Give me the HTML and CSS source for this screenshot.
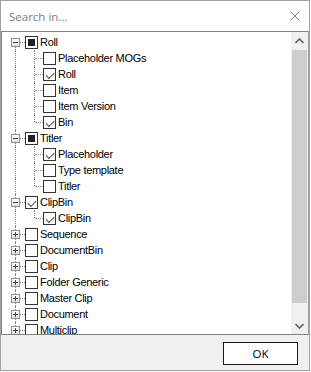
FILE: index.html
```html
<!DOCTYPE html>
<html lang="en">
<head>
    <meta charset="UTF-8">
    <title>Search in...</title>
    <link rel="stylesheet" href="styles.css">
</head>
<body>
    <div class="dialog">
        <div class="search">
            <span class="placeholder">Search in...</span>
            <svg class="close" width="10" height="10" viewBox="0 0 10 10">
                <path d="M0.5 0.5 L9.5 9.5 M9.5 0.5 L0.5 9.5" stroke="#7a7a7a" stroke-width="1" fill="none"/>
            </svg>
        </div>

        <div class="tree-box">
            <ul class="tree">
                <!-- Roll -->
                <li class="row first"><span class="guide root"><span class="expander minus"></span></span><span class="check partial"></span><span class="label">Roll</span></li>
                <li class="row"><span class="guide pass"></span><span class="guide branch"></span><span class="check"></span><span class="label">Placeholder MOGs</span></li>
                <li class="row"><span class="guide pass"></span><span class="guide branch"></span><span class="check checked"></span><span class="label">Roll</span></li>
                <li class="row"><span class="guide pass"></span><span class="guide branch"></span><span class="check"></span><span class="label">Item</span></li>
                <li class="row"><span class="guide pass"></span><span class="guide branch"></span><span class="check"></span><span class="label">Item Version</span></li>
                <li class="row"><span class="guide pass"></span><span class="guide branch last"></span><span class="check checked"></span><span class="label">Bin</span></li>

                <!-- Titler -->
                <li class="row"><span class="guide root"><span class="expander minus"></span></span><span class="check partial"></span><span class="label">Titler</span></li>
                <li class="row"><span class="guide pass"></span><span class="guide branch"></span><span class="check checked"></span><span class="label">Placeholder</span></li>
                <li class="row"><span class="guide pass"></span><span class="guide branch"></span><span class="check"></span><span class="label">Type template</span></li>
                <li class="row"><span class="guide pass"></span><span class="guide branch last"></span><span class="check"></span><span class="label">Titler</span></li>

                <!-- ClipBin -->
                <li class="row"><span class="guide root"><span class="expander minus"></span></span><span class="check checked"></span><span class="label">ClipBin</span></li>
                <li class="row"><span class="guide pass"></span><span class="guide branch last"></span><span class="check checked"></span><span class="label">ClipBin</span></li>

                <!-- collapsed -->
                <li class="row"><span class="guide root"><span class="expander plus"></span></span><span class="check"></span><span class="label">Sequence</span></li>
                <li class="row"><span class="guide root"><span class="expander plus"></span></span><span class="check"></span><span class="label">DocumentBin</span></li>
                <li class="row"><span class="guide root"><span class="expander plus"></span></span><span class="check"></span><span class="label">Clip</span></li>
                <li class="row"><span class="guide root"><span class="expander plus"></span></span><span class="check"></span><span class="label">Folder Generic</span></li>
                <li class="row"><span class="guide root"><span class="expander plus"></span></span><span class="check"></span><span class="label">Master Clip</span></li>
                <li class="row"><span class="guide root"><span class="expander plus"></span></span><span class="check"></span><span class="label">Document</span></li>
                <li class="row"><span class="guide root"><span class="expander plus"></span></span><span class="check"></span><span class="label">Multiclip</span></li>
            </ul>

            <div class="scrollbar">
                <div class="arrow up">
                    <svg width="9" height="6" viewBox="0 0 9 6"><path d="M0.5 5 L4.5 1 L8.5 5" stroke="#606060" stroke-width="1.6" fill="none"/></svg>
                </div>
                <div class="track"><div class="thumb"></div></div>
                <div class="arrow down">
                    <svg width="9" height="6" viewBox="0 0 9 6"><path d="M0.5 1 L4.5 5 L8.5 1" stroke="#606060" stroke-width="1.6" fill="none"/></svg>
                </div>
            </div>
        </div>

        <div class="footer">
            <button class="ok">OK</button>
        </div>
    </div>
</body>
</html>
```

FILE: styles.css
```css
* {
    margin: 0;
    padding: 0;
    box-sizing: border-box;
}

body {
    background: #ffffff;
    font-family: 'Liberation Sans', Arial, sans-serif;
}

.dialog {
    width: 310px;
    height: 371px;
    border: 1px solid #a0a0a0;
    background: #f0f0f0;
    display: flex;
    flex-direction: column;
}

.search {
    height: 30px;
    background: #ffffff;
    display: flex;
    align-items: center;
    justify-content: space-between;
    padding: 0 9px 0 8px;
}

.placeholder {
    font-family: 'Open Sans', sans-serif;
    font-size: 11.5px;
    color: #7a7a7a;
}

.tree-box {
    height: 304px;
    border: 1px solid #828282;
    border-right-color: #a0a0a0;
    background: #ffffff;
    display: flex;
}

.tree {
    flex: 1;
    list-style: none;
    overflow: hidden;
    padding-top: 2px;
}

.row {
    height: 16px;
    display: flex;
    align-items: center;
    font-size: 11px;
    letter-spacing: -0.3px;
    line-height: 16px;
    color: #000000;
    white-space: nowrap;
}

/* tree guide lines */
.guide {
    position: relative;
    height: 16px;
    flex-shrink: 0;
}

.guide.root,
.guide.pass {
    width: 23px;
}

.guide.branch {
    width: 18px;
}

.guide.root::before,
.guide.pass::before {
    content: '';
    position: absolute;
    left: 13px;
    top: 0;
    bottom: 0;
    border-left: 1px dotted #8a8a8a;
}

.first .guide.root::before {
    top: 8px;
}

.guide.root::after {
    content: '';
    position: absolute;
    left: 18px;
    width: 5px;
    top: 8px;
    border-top: 1px dotted #8a8a8a;
}

.guide.branch::before {
    content: '';
    position: absolute;
    left: 9px;
    top: 0;
    bottom: 0;
    border-left: 1px dotted #8a8a8a;
}

.guide.branch.last::before {
    bottom: 8px;
}

.guide.branch::after {
    content: '';
    position: absolute;
    left: 10px;
    width: 8px;
    top: 8px;
    border-top: 1px dotted #8a8a8a;
}

.expander {
    position: absolute;
    left: 9px;
    top: 4px;
    width: 9px;
    height: 9px;
    border: 1px solid #919191;
    background: linear-gradient(#ffffff, #e0e0e0);
    z-index: 1;
}

.expander::before {
    content: '';
    position: absolute;
    left: 1px;
    top: 3px;
    width: 5px;
    height: 1px;
    background: #2f4b7c;
}

.expander.plus::after {
    content: '';
    position: absolute;
    left: 3px;
    top: 1px;
    width: 1px;
    height: 5px;
    background: #2f4b7c;
}

/* checkboxes */
.check {
    width: 13px;
    height: 13px;
    border: 1px solid #333333;
    background: #ffffff;
    flex-shrink: 0;
    position: relative;
}

.check.partial::before {
    content: '';
    position: absolute;
    left: 2px;
    top: 2px;
    width: 7px;
    height: 7px;
    background: #222222;
}

.check.checked::before {
    content: '';
    position: absolute;
    left: 2px;
    top: 1px;
    width: 7px;
    height: 4px;
    border-left: 1.5px solid #444444;
    border-bottom: 1.5px solid #444444;
    transform: translate(0, 2px) rotate(-45deg);
    transform-origin: center;
}

.label {
    margin-left: 2px;
}

/* scrollbar */
.scrollbar {
    width: 17px;
    background: #f0f0f0;
    display: flex;
    flex-direction: column;
}

.arrow {
    height: 17px;
    display: flex;
    align-items: center;
    justify-content: center;
}

.track {
    flex: 1;
    padding: 1px 1px;
}

.thumb {
    height: 253px;
    background: #cdcdcd;
}

/* footer */
.footer {
    flex: 1;
    display: flex;
    justify-content: flex-end;
    padding: 7px 11px 0 0;
}

.ok {
    width: 75px;
    height: 23px;
    border: 1px solid #1a1a1a;
    background: #ffffff;
    font-family: 'Open Sans', sans-serif;
    font-size: 11.5px;
    color: #000000;
}
```
